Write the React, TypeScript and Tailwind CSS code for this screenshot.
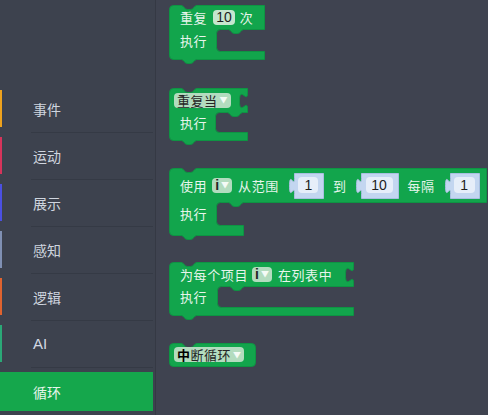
import React from 'react';

const NOTCH_R = 'c 2 0 3 4 6 4 h 3 c 3 0 4 -4 6 -4';
const NOTCH_L = 'c -2 0 -3 4 -6 4 h -3 c -3 0 -4 -4 -6 -4';
const HOLE_DOWN = 'c 0 10 -8 -8 -8 7.5 s 8 -2.5 8 7.5';

interface CShape {
  w: number;
  h1: number;
  mx: number;
  mh: number;
  aw: number;
  ah: number;
  hole?: boolean;
}

// C-shaped statement block outline (top row, mouth, bottom arm)
const cPath = ({ w, h1, mx, mh, aw, ah, hole }: CShape) => {
  const H2 = h1 + mh;
  const H = H2 + ah;
  let d = `M0,4 Q0,0 4,0 H12 ${NOTCH_R} H${w}`;
  if (hole) d += ` V5 ${HOLE_DOWN}`;
  d += ` V${h1} H${mx + 27} ${NOTCH_L} H${mx + 4} Q${mx},${h1} ${mx},${h1 + 4}`;
  d += ` V${H2 - 4} Q${mx},${H2} ${mx + 4},${H2} H${aw} V${H} H27 ${NOTCH_L} H4 Q0,${H} 0,${H - 4} Z`;
  return d;
};

const simplePath = (w: number, h: number) =>
  `M0,4 Q0,0 4,0 H12 ${NOTCH_R} H${w - 4} Q${w},0 ${w},4 V${h - 4} Q${w},${h} ${w - 4},${h} H4 Q0,${h} 0,${h - 4} Z`;

const BlockSvg = ({ d }: { d: string }) => (
  <svg className="absolute left-0 top-0 overflow-visible" width="1" height="1">
    <path d={d} transform="translate(0.5 0.5)" fill="#12a54c" stroke="#0e9443" strokeWidth="1" />
  </svg>
);

const cjk = "font-['Noto_Sans_CJK_SC','Noto_Sans',sans-serif]";

const Label = ({ children, className = '' }: { children: React.ReactNode; className?: string }) => (
  <span className={`${cjk} text-[13px] leading-none tracking-[0.6px] text-[#e8f5ec] ${className}`}>
    {children}
  </span>
);

const Dropdown = ({ children, className = '' }: { children: React.ReactNode; className?: string }) => (
  <div
    className={`flex h-[15px] items-center rounded-[4px] bg-[#b3dcbf] px-[3px] ${cjk} text-[13px] leading-none text-[#262626] ${className}`}
  >
    {children}
    <span className="ml-[2px] text-[8px] leading-none text-[#f4fbf6]">▼</span>
  </div>
);

const ShadowNum = ({ value, bw, box, field }: { value: string; bw: number; box: string; field: string }) => (
  <div className={`relative flex h-[25px] items-center justify-center pl-[5px] ${box}`}>
    <svg className="absolute left-0 top-0 overflow-visible" width="1" height="1">
      <path
        d={`M5,0 H${5 + bw} V25 H5 V20 c0,-10 -5,8 -5,-7.5 s5,2.5 5,-7.5 V0 Z`}
        transform="translate(0.5 0.5)"
        fill="#c3d6f0"
        stroke="#a9bfe0"
        strokeWidth="1"
      />
    </svg>
    <div
      className={`relative flex h-[16px] items-center justify-center rounded-[4px] bg-[#e6eef9] font-['Liberation_Sans',sans-serif] text-[14px] leading-none text-[#1e1e1e] ${field}`}
    >
      {value}
    </div>
  </div>
);

const NumField = ({ children, className = '' }: { children: React.ReactNode; className?: string }) => (
  <div
    className={`flex h-[15px] items-center rounded-[4px] bg-[#c6e6ce] px-[3px] font-['Liberation_Sans',sans-serif] text-[14px] leading-none text-[#1e1e1e] ${className}`}
  >
    {children}
  </div>
);

const VarI = () => <span className="font-['Liberation_Sans',sans-serif] text-[14px] font-bold">i</span>;

const categories = [
  { name: '事件', color: 'bg-[#eea21d]' },
  { name: '运动', color: 'bg-[#d6345b]' },
  { name: '展示', color: 'bg-[#4b50e2]' },
  { name: '感知', color: 'bg-[#8090b3]' },
  { name: '逻辑', color: 'bg-[#e0632f]' },
  { name: 'AI', color: 'bg-[#2ba877]' },
];

export default function App() {
  return (
    <div className="flex h-[415px] w-[488px] overflow-hidden bg-[#3f4350]">
      {/* Category toolbox */}
      <div className="h-full w-[156px] shrink-0 border-r border-[#353944] bg-[#3d424e] pt-[90px]">
        {categories.map((c) => (
          <div key={c.name}>
            <div className="flex h-[37px] items-center">
              <div className={`h-full w-[2px] ${c.color}`} />
              {c.name === 'AI' ? (
                <span className="ml-[31px] font-['Liberation_Sans',sans-serif] text-[15px] leading-none text-[#d3d9e3]">
                  AI
                </span>
              ) : (
                <span className={`ml-[31px] ${cjk} text-[14px] leading-none text-[#cfd5df]`}>{c.name}</span>
              )}
            </div>
            <div className="mb-[4px] ml-[31px] mt-[5px] h-px w-[122px] bg-[#353a45]" />
          </div>
        ))}
        <div className="flex h-[39px] w-[153px] items-center bg-[#15a74c]">
          <span className={`ml-[33px] ${cjk} text-[14px] leading-none text-[#e6f5eb]`}>循环</span>
        </div>
      </div>

      {/* Flyout */}
      <div className="flex flex-col items-start pl-[13px] pt-[5px]">
        {/* repeat N times */}
        <div className="relative h-[54px] w-[95px]">
          <BlockSvg d={cPath({ w: 95, h1: 24, mx: 47, mh: 22, aw: 95, ah: 8 })} />
          <div className="relative flex flex-col">
            <div className="flex h-[24px] items-center pl-[11px]">
              <Label>重复</Label>
              <NumField className="ml-[6px]">10</NumField>
              <Label className="ml-[5px]">次</Label>
            </div>
            <div className="flex h-[22px] items-center pl-[11px]">
              <Label>执行</Label>
            </div>
          </div>
        </div>

        {/* repeat while */}
        <div className="relative mt-[29px] h-[52px] w-[78px]">
          <BlockSvg d={cPath({ w: 78, h1: 24, mx: 46, mh: 20, aw: 78, ah: 8, hole: true })} />
          <div className="relative flex flex-col">
            <div className="flex h-[24px] items-center pl-[5px]">
              <Dropdown>
                <span className="tracking-[0.5px]">重复当</span>
              </Dropdown>
            </div>
            <div className="flex h-[20px] items-center pl-[11px]">
              <Label>执行</Label>
            </div>
          </div>
        </div>

        {/* for range */}
        <div className="relative mt-[28px] h-[67px] w-[317px]">
          <BlockSvg d={cPath({ w: 317, h1: 34, mx: 47, mh: 23, aw: 74, ah: 10 })} />
          <div className="relative flex flex-col">
            <div className="flex h-[34px] items-center pl-[11px]">
              <Label>使用</Label>
              <Dropdown className="ml-[5px]">
                <VarI />
              </Dropdown>
              <Label className="ml-[6px]">从范围</Label>
              <ShadowNum value="1" bw={29} box="ml-[10px] w-[34px]" field="w-[20px]" />
              <Label className="ml-[10px]">到</Label>
              <ShadowNum value="10" bw={37} box="ml-[9px] w-[42px]" field="w-[27px]" />
              <Label className="ml-[10px]">每隔</Label>
              <ShadowNum value="1" bw={29} box="ml-[10px] w-[34px]" field="w-[21px]" />
            </div>
            <div className="flex h-[23px] items-center pl-[11px]">
              <Label>执行</Label>
            </div>
          </div>
        </div>

        {/* for each in list */}
        <div className="relative mt-[27px] h-[53px] w-[184px]">
          <BlockSvg d={cPath({ w: 184, h1: 24, mx: 48, mh: 21, aw: 184, ah: 8, hole: true })} />
          <div className="relative flex flex-col">
            <div className="flex h-[24px] items-center pl-[11px]">
              <Label>为每个项目</Label>
              <Dropdown className="ml-[4px]">
                <VarI />
              </Dropdown>
              <Label className="ml-[6px]">在列表中</Label>
            </div>
            <div className="flex h-[21px] items-center pl-[11px]">
              <Label>执行</Label>
            </div>
          </div>
        </div>

        {/* break */}
        <div className="relative mt-[28px] h-[23px] w-[86px]">
          <BlockSvg d={simplePath(86, 23)} />
          <div className="relative flex h-[23px] items-center pl-[5px]">
            <Dropdown>
              <span className="tracking-[0.5px]">
                <span className="font-bold text-black">中</span>断循环
              </span>
            </Dropdown>
          </div>
        </div>
      </div>
    </div>
  );
}
